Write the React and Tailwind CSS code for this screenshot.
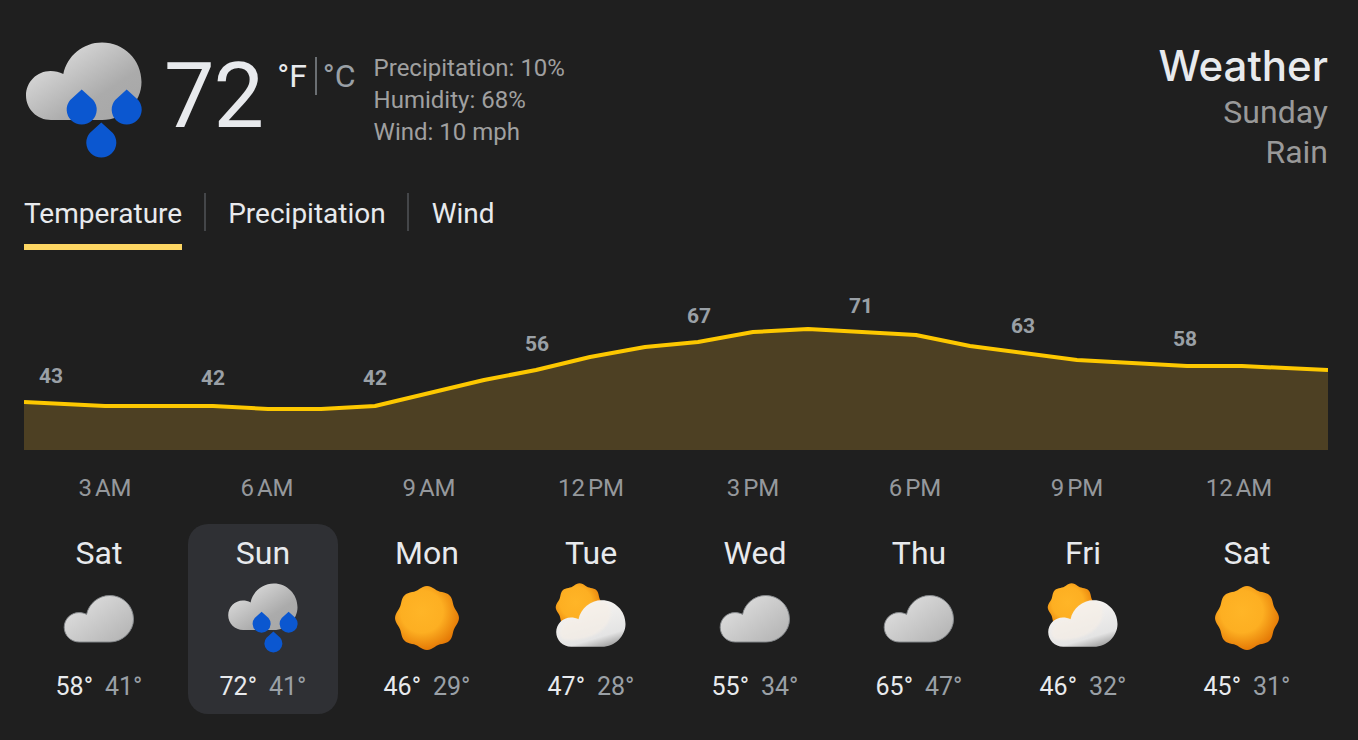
import React from "react";

const linePts = [[0,152],[81,156],[189,156],[244,159],[297,159],[351,156],[460,130],[512,120],[566,107],[621,97],[674,92],[729,82],[784,79],[892,85],[946,96],[1053,110],[1163,116],[1218,116],[1304,120]];
const lineStr = linePts.map((p) => p.join(",")).join(" ");
const labels = [[27,"43",126],[189,"42",128],[351,"42",128],[513,"56",94],[675,"67",66],[837,"71",56],[999,"63",76],[1161,"58",89]];
const hours = ["3\u202FAM","6\u202FAM","9\u202FAM","12\u202FPM","3\u202FPM","6\u202FPM","9\u202FPM","12\u202FAM"];
const days = [
  ["Sat","cloud","58°","41°"],
  ["Sun","rain","72°","41°"],
  ["Mon","sun","46°","29°"],
  ["Tue","partly","47°","28°"],
  ["Wed","cloud","55°","34°"],
  ["Thu","cloud","65°","47°"],
  ["Fri","partly","46°","32°"],
  ["Sat","sun","45°","31°"],
];

const CLOUD = "M27 80C13 80 2 69 2 55.5C2 42 13 31 26.5 31C31 31 35.5 32 39.3 34C43 16 59 2.5 78 2.5C100 2.5 117.5 20 117.5 42C117.5 62 100 80 78 80Z";

function sunPath(cx, cy, R, a) {
  let d = "";
  for (let i = 0; i < 96; i++) {
    const t = (i / 96) * Math.PI * 2;
    const r = R + a * Math.cos(8 * t);
    d += (i ? "L" : "M") + (cx + r * Math.sin(t)).toFixed(2) + " " + (cy - r * Math.cos(t)).toFixed(2);
  }
  return d + "Z";
}

function Drop({ cx, cy }) {
  return <path d={`M${cx} ${cy - 20}L${cx + 11.5} ${cy - 9.6}A15 15 0 1 1 ${cx - 11.5} ${cy - 9.6}Z`} fill="#0b57d0" />;
}

function Defs() {
  return (
    <svg className="absolute w-0 h-0" aria-hidden="true">
      <defs>
        <linearGradient id="grey" x1="0.05" y1="0.1" x2="0.95" y2="0.9">
          <stop offset="0" stopColor="#e2e2e2" />
          <stop offset="1" stopColor="#b4b4b4" />
        </linearGradient>
        <linearGradient id="greyRain" x1="0.1" y1="0.1" x2="0.85" y2="0.85">
          <stop offset="0" stopColor="#e2e2e2" />
          <stop offset="0.75" stopColor="#ababab" />
          <stop offset="1" stopColor="#a8a8a8" />
        </linearGradient>
        <linearGradient id="white" x1="0.4" y1="0.2" x2="0.78" y2="1.05">
          <stop offset="0" stopColor="#f4f2f0" />
          <stop offset="0.68" stopColor="#e4e4e4" />
          <stop offset="1" stopColor="#8f8f8f" />
        </linearGradient>
        <radialGradient id="sun" cx="0.42" cy="0.4" r="0.66">
          <stop offset="0" stopColor="#ffb527" />
          <stop offset="0.5" stopColor="#fdaf22" />
          <stop offset="1" stopColor="#e06f00" />
        </radialGradient>
        <filter id="soft" x="-10%" y="-10%" width="120%" height="120%">
          <feGaussianBlur stdDeviation="1.6" />
        </filter>
      </defs>
    </svg>
  );
}

function WeatherIcon({ kind, size }) {
  return (
    <svg width={size} height={size} viewBox="0 0 120 120" className="block shrink-0">
      {kind === "rain" && (
        <g>
          <path d={CLOUD} fill="url(#greyRain)" />
          <Drop cx={57.7} cy={69.5} />
          <Drop cx={102.7} cy={69.5} />
          <Drop cx={77.3} cy={102.5} />
        </g>
      )}
      {kind === "cloud" && (
        <path d={CLOUD} transform="translate(0 20)" fill="url(#grey)" stroke="#85888b" strokeWidth="1.6" />
      )}
      {kind === "sun" && <path d={sunPath(60, 60, 51, 2.3)} fill="url(#sun)" />}
      {kind === "partly" && (
        <g>
          <path d={sunPath(41, 42, 38, 1.8)} fill="url(#sun)" />
          <path d={CLOUD} transform="translate(0 28)" fill="url(#white)" />
          <path d="M8 84C12 66 26 58 40 64C44 46 60 32 76 32C84 32 90 36 92 44C96 64 84 78 66 88C50 96 28 98 16 96C10 94 7 90 8 84Z" fill="#f7efe6" opacity="0.6" filter="url(#soft)" />
        </g>
      )}
    </svg>
  );
}

export default function App() {
  return (
    <div className="relative w-[1358px] h-[740px] overflow-hidden bg-[#1f1f1f] pl-6 pr-[30px] pt-10 font-['Roboto',sans-serif] text-[#e8eaed]">
      <Defs />
      <header className="flex h-[120px] justify-between">
        <div className="flex items-start">
          <WeatherIcon kind="rain" size={120} />
          <div className="ml-[20px] mt-[4px] text-[90px] leading-[106px] tracking-[-1px] font-normal">72</div>
          <div className="ml-[14px] mt-[17px] flex items-center">
            <span className="text-[32px] leading-[38px]">°F</span>
            <span className="ml-[8px] mr-[6px] h-[38px] w-[2px] bg-[#6b6f73]"></span>
            <span className="text-[32px] leading-[38px] text-[#9aa0a6]">°C</span>
          </div>
          <div className="ml-[18px] mt-[12px] text-[24px] leading-[32px] text-[#a0a0a0]">
            <div>Precipitation: 10%</div>
            <div>Humidity: 68%</div>
            <div>Wind: 10 mph</div>
          </div>
        </div>
        <div className="text-right">
          <div className="font-['Inter',sans-serif] text-[42px] leading-[52px] font-medium">Weather</div>
          <div className="text-[32px] leading-[40px] text-[#999999]">Sunday</div>
          <div className="text-[32px] leading-[40px] text-[#999999]">Rain</div>
        </div>
      </header>

      <nav className="mt-[33px] flex h-[57px] items-start text-[28px] leading-[38px]">
        <div className="flex flex-col">
          <span className="pt-[2px] -mb-[2px]">Temperature</span>
          <span className="mt-[13px] h-[6px] w-full bg-[#fdd663]"></span>
        </div>
        <span className="mx-[22px] h-[38px] w-[2px] bg-[#444649]"></span>
        <span className="pt-[2px]">Precipitation</span>
        <span className="ml-[21px] mr-[23px] h-[38px] w-[2px] bg-[#444649]"></span>
        <span className="pt-[2px]">Wind</span>
      </nav>

      <svg width="1304" height="200" viewBox="0 0 1304 200" className="block">
        <polygon points={`0,200 ${lineStr} 1304,200`} fill="#4d4023" />
        <polyline points={lineStr} fill="none" stroke="#fdc800" strokeWidth="4" strokeLinejoin="round" />
        {labels.map(([x, t, y]) => (
          <text key={x} x={x} y={y + 7} textAnchor="middle" className="fill-[#9aa0a6] text-[21px] font-bold">{t}</text>
        ))}
      </svg>

      <div className="mt-[26px] grid h-[24px] w-[1296px] grid-cols-8 text-center text-[24px] leading-[24px] text-[#95989c]">
        {hours.map((h) => <div key={h}>{h}</div>)}
      </div>

      <div className="mt-[24px] grid h-[190px] grid-cols-[repeat(8,150px)] gap-[14px]">
        {days.map(([d, k, hi, lo], i) => (
          <div key={i} className={`flex flex-col items-center rounded-[20px] pt-[12px] ${i === 1 ? "bg-[#2f3034]" : ""}`}>
            <div className="text-[32px] leading-[34px]">{d}</div>
            <div className="mt-[12px]"><WeatherIcon kind={k} size={72} /></div>
            <div className="mt-[19px] flex gap-[12px] text-[25px] leading-[28px]">
              <span>{hi}</span>
              <span className="text-[#9aa0a6]">{lo}</span>
            </div>
          </div>
        ))}
      </div>
    </div>
  );
}
